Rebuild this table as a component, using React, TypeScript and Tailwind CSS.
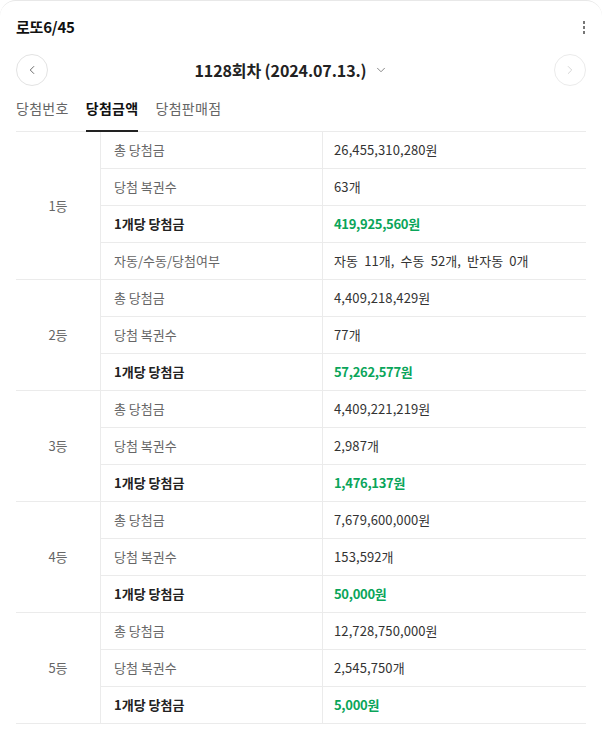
import { ChevronLeft, ChevronRight, ChevronDown } from 'lucide-react';

type Row = { label: string; value: string; strong?: boolean };
type Rank = { rank: string; rows: Row[] };

const ranks: Rank[] = [
  {
    rank: '1등',
    rows: [
      { label: '총 당첨금', value: '26,455,310,280원' },
      { label: '당첨 복권수', value: '63개' },
      { label: '1개당 당첨금', value: '419,925,560원', strong: true },
      { label: '자동/수동/당첨여부', value: '자동 11개, 수동 52개, 반자동 0개' },
    ],
  },
  {
    rank: '2등',
    rows: [
      { label: '총 당첨금', value: '4,409,218,429원' },
      { label: '당첨 복권수', value: '77개' },
      { label: '1개당 당첨금', value: '57,262,577원', strong: true },
    ],
  },
  {
    rank: '3등',
    rows: [
      { label: '총 당첨금', value: '4,409,221,219원' },
      { label: '당첨 복권수', value: '2,987개' },
      { label: '1개당 당첨금', value: '1,476,137원', strong: true },
    ],
  },
  {
    rank: '4등',
    rows: [
      { label: '총 당첨금', value: '7,679,600,000원' },
      { label: '당첨 복권수', value: '153,592개' },
      { label: '1개당 당첨금', value: '50,000원', strong: true },
    ],
  },
  {
    rank: '5등',
    rows: [
      { label: '총 당첨금', value: '12,728,750,000원' },
      { label: '당첨 복권수', value: '2,545,750개' },
      { label: '1개당 당첨금', value: '5,000원', strong: true },
    ],
  },
];

export default function App() {
  return (
    <div className="min-h-[734px] bg-white font-['Noto_Sans_CJK_KR','Noto_Sans',sans-serif]">
      <div className="rounded-t-2xl border-t border-[#e8e8e8] bg-white pb-3">
        {/* 헤더 */}
        <div className="flex h-[53px] items-center justify-between px-[16px]">
          <h1 className="text-[15px] font-bold tracking-[-0.2px] text-[#111]">로또6/45</h1>
          <div className="flex flex-col items-center gap-[2px] pr-[1px]">
            <span className="h-[3px] w-[2px] bg-[#777]" />
            <span className="h-[3px] w-[2px] bg-[#777]" />
            <span className="h-[3px] w-[2px] bg-[#777]" />
          </div>
        </div>

        {/* 회차 선택 */}
        <div className="flex items-center justify-between px-[16px]">
          <button className="flex h-[32px] w-[32px] items-center justify-center rounded-full border border-[#e3e3e3] bg-white">
            <ChevronLeft className="h-[14px] w-[14px] text-[#555]" strokeWidth={1.5} />
          </button>
          <div className="mr-[20px] flex items-center gap-[7px]">
            <span className="text-[16px] font-bold tracking-[-0.1px] text-[#222]">1128회차 (2024.07.13.)</span>
            <ChevronDown className="h-[14px] w-[14px] text-[#777]" strokeWidth={1.5} />
          </div>
          <button className="flex h-[32px] w-[32px] items-center justify-center rounded-full border border-[#ebebeb] bg-white">
            <ChevronRight className="h-[14px] w-[14px] text-[#cfcfcf]" strokeWidth={1.5} />
          </button>
        </div>

        {/* 탭 */}
        <div className="mx-[16px] mt-[12px] flex gap-[17px] border-b border-[#ebebeb] text-[14px] tracking-[0.3px]">
          <span className="pb-[12px] text-[#666]">당첨번호</span>
          <span className="-mb-px border-b-2 border-[#222] pb-[11px] font-bold text-[#111]">당첨금액</span>
          <span className="pb-[12px] text-[#666]">당첨판매점</span>
        </div>

        {/* 당첨금 표 */}
        <div className="mx-[16px] text-[13px]">
          {ranks.map((r) => (
            <div key={r.rank} className="flex border-b border-[#ebebeb]">
              <div className="flex w-[85px] shrink-0 items-center justify-center border-r border-[#ebebeb] text-[#666]">
                {r.rank}
              </div>
              <div className="flex-1">
                {r.rows.map((row, i) => (
                  <div
                    key={row.label}
                    className={`flex items-center ${i < r.rows.length - 1 ? 'h-[37px] border-b border-[#ebebeb]' : 'h-[36px]'}`}
                  >
                    <div
                      className={`flex h-full w-[222px] shrink-0 items-center border-r border-[#ebebeb] pl-[13px] ${
                        row.strong ? 'font-bold text-[#222]' : 'text-[#666]'
                      }`}
                    >
                      {row.label}
                    </div>
                    <div
                      className={`pl-[11px] [word-spacing:3px] ${
                        row.strong ? 'font-bold tracking-[-0.3px] text-[#0aa55a]' : 'tracking-[0.1px] text-[#333]'
                      }`}
                    >
                      {row.value}
                    </div>
                  </div>
                ))}
              </div>
            </div>
          ))}
        </div>
      </div>
    </div>
  );
}
